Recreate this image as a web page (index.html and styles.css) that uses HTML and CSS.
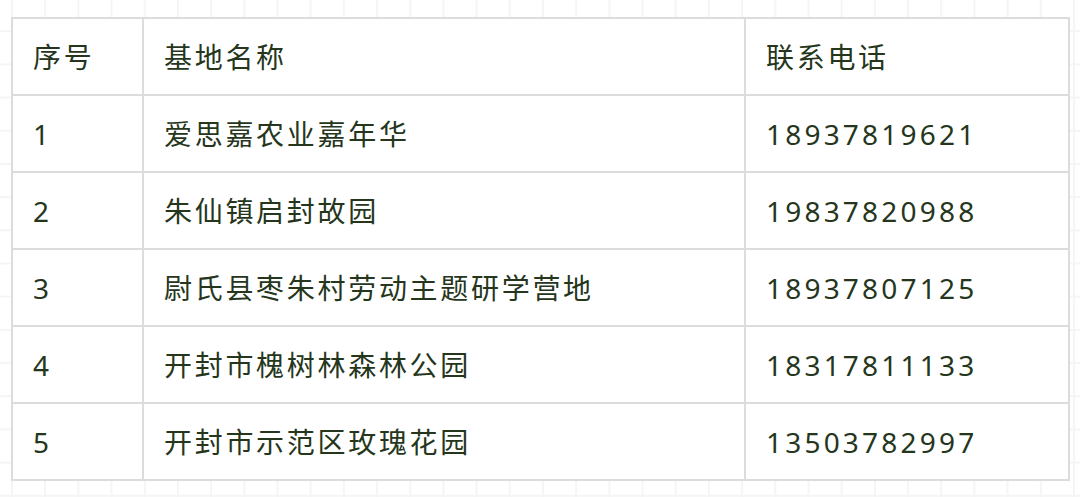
FILE: index.html
```html
<!DOCTYPE html>
<html lang="zh">
<head>
<meta charset="utf-8">
<link rel="stylesheet" href="styles.css">
</head>
<body>
<table class="bases">
  <colgroup>
    <col class="c-no">
    <col class="c-name">
    <col class="c-tel">
  </colgroup>
  <tr><td>序号</td><td>基地名称</td><td>联系电话</td></tr>
  <tr><td>1</td><td>爱思嘉农业嘉年华</td><td class="tel">18937819621</td></tr>
  <tr><td>2</td><td>朱仙镇启封故园</td><td class="tel">19837820988</td></tr>
  <tr><td>3</td><td>尉氏县枣朱村劳动主题研学营地</td><td class="tel">18937807125</td></tr>
  <tr><td>4</td><td>开封市槐树林森林公园</td><td class="tel">18317811133</td></tr>
  <tr><td>5</td><td>开封市示范区玫瑰花园</td><td class="tel">13503782997</td></tr>
</table>
</body>
</html>
```
FILE: styles.css
```css
html, body {
  margin: 0;
  padding: 0;
}
body {
  width: 1080px;
  height: 497px;
  overflow: hidden;
  box-sizing: border-box;
  padding: 17px 0 0 11px;
  background-color: #ffffff;
  background-image:
    linear-gradient(to right, #f5f5f5 2px, transparent 2px),
    linear-gradient(to bottom, #f5f5f5 2px, transparent 2px);
  background-size: 33.2px 33.2px;
  background-position: 11px -3px;
  font-family: "Noto Sans", "Noto Sans CJK SC", sans-serif;
}
.bases {
  border-collapse: collapse;
  width: 1059px;
  background: #ffffff;
  color: #25361c;
  font-size: 28px;
  letter-spacing: 2.7px;
}
.c-no { width: 131px; }
.c-name { width: 602px; }
.c-tel { width: 324px; }
.bases td {
  border: 2px solid #dcdcdc;
  height: 77px;
  padding: 0 0 0 20px;
  box-sizing: border-box;
  vertical-align: middle;
  line-height: 1;
}
.bases td.tel {
  letter-spacing: 3.2px;
}
```
